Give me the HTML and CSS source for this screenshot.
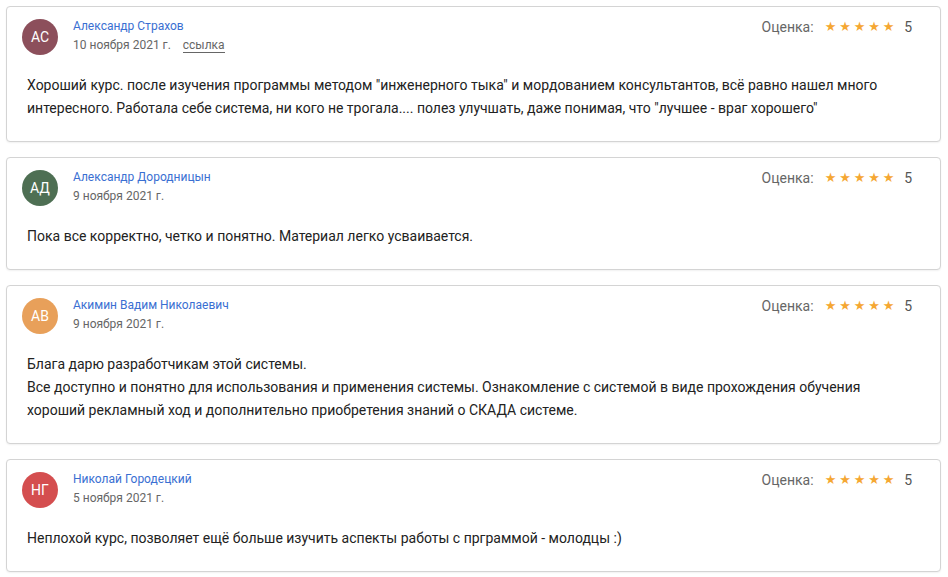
FILE: index.html
```html
<!DOCTYPE html>
<html lang="ru">
<head>
  <meta charset="UTF-8" />
  <meta name="viewport" content="width=device-width, initial-scale=1.0"/>
  <title>Отзывы</title>
  <link rel="stylesheet" href="styles.css">
</head>
<body>
  <div class="reviews">

    <div class="review">
      <div class="review-head">
        <div class="avatar avatar-plum">АС</div>
        <div class="author">
          <a class="author-name" href="#">Александр Страхов</a>
          <div class="author-meta">
            <span class="date">10 ноября 2021 г.</span>
            <a class="permalink" href="#">ссылка</a>
          </div>
        </div>
        <div class="rating">
          <span class="rating-label">Оценка:</span>
          <span class="stars"><span>★</span><span>★</span><span>★</span><span>★</span><span>★</span></span>
          <span class="rating-value">5</span>
        </div>
      </div>
      <div class="review-text">
        <p>Хороший курс. после изучения программы методом "инженерного тыка" и мордованием консультантов, всё равно нашел много интересного. Работала себе система, ни кого не трогала.... полез улучшать, даже понимая, что "лучшее - враг хорошего"</p>
      </div>
    </div>

    <div class="review">
      <div class="review-head">
        <div class="avatar avatar-green">АД</div>
        <div class="author">
          <a class="author-name" href="#">Александр Дородницын</a>
          <div class="author-meta">
            <span class="date">9 ноября 2021 г.</span>
          </div>
        </div>
        <div class="rating">
          <span class="rating-label">Оценка:</span>
          <span class="stars"><span>★</span><span>★</span><span>★</span><span>★</span><span>★</span></span>
          <span class="rating-value">5</span>
        </div>
      </div>
      <div class="review-text">
        <p>Пока все корректно, четко и понятно. Материал легко усваивается.</p>
      </div>
    </div>

    <div class="review">
      <div class="review-head">
        <div class="avatar avatar-orange">АВ</div>
        <div class="author">
          <a class="author-name" href="#">Акимин Вадим Николаевич</a>
          <div class="author-meta">
            <span class="date">9 ноября 2021 г.</span>
          </div>
        </div>
        <div class="rating">
          <span class="rating-label">Оценка:</span>
          <span class="stars"><span>★</span><span>★</span><span>★</span><span>★</span><span>★</span></span>
          <span class="rating-value">5</span>
        </div>
      </div>
      <div class="review-text">
        <p>Блага дарю разработчикам этой системы.<br>Все доступно и понятно для использования и применения системы. Ознакомление с системой в виде прохождения обучения хороший рекламный ход и дополнительно приобретения знаний о СКАДА системе.</p>
      </div>
    </div>

    <div class="review">
      <div class="review-head">
        <div class="avatar avatar-red">НГ</div>
        <div class="author">
          <a class="author-name" href="#">Николай Городецкий</a>
          <div class="author-meta">
            <span class="date">5 ноября 2021 г.</span>
          </div>
        </div>
        <div class="rating">
          <span class="rating-label">Оценка:</span>
          <span class="stars"><span>★</span><span>★</span><span>★</span><span>★</span><span>★</span></span>
          <span class="rating-value">5</span>
        </div>
      </div>
      <div class="review-text">
        <p>Неплохой курс, позволяет ещё больше изучить аспекты работы с прграммой - молодцы :)</p>
      </div>
    </div>

  </div>
</body>
</html>
```

FILE: styles.css
```css
* {
  margin: 0;
  padding: 0;
  box-sizing: border-box;
}

body {
  font-family: Roboto, 'Liberation Sans', Arial, sans-serif;
  background: #fff;
  color: #222;
  padding: 6px 7px 6px 6px;
}

.reviews {
  display: flex;
  flex-direction: column;
  gap: 15px;
}

.review {
  background: #fff;
  border: 1px solid #d4d4d4;
  border-radius: 4px;
  box-shadow: 0 1px 2px rgba(0, 0, 0, 0.06);
  padding: 11px 28px 21px 15px;
}

.review-head {
  display: flex;
  align-items: flex-start;
}

.avatar {
  width: 36px;
  height: 36px;
  margin-top: 1px;
  border-radius: 50%;
  flex-shrink: 0;
  display: flex;
  align-items: center;
  justify-content: center;
  color: #fff;
  font-size: 14px;
}

.avatar-plum { background: #8c4f5b; }
.avatar-green { background: #4e6f53; }
.avatar-orange { background: #e8a05a; }
.avatar-red { background: #d44e4f; }

.author {
  margin-left: 15px;
}

.author-name {
  display: block;
  font-size: 12px;
  line-height: 16px;
  color: #3a6fd2;
  text-decoration: none;
}

.author-meta {
  margin-top: 3px;
  font-size: 12px;
  line-height: 16px;
  color: #666;
}

.permalink {
  margin-left: 9px;
  color: #666;
  text-decoration: none;
  border-bottom: 1px solid #666;
}

.rating {
  margin-left: auto;
  display: flex;
  align-items: center;
  font-size: 14px;
  line-height: 18px;
  color: #666;
}

.stars {
  display: flex;
  margin-left: 11px;
  color: #f5a732;
  font-family: 'DejaVu Sans', sans-serif;
  font-size: 13px;
}

.stars span {
  width: 14.5px;
}

.rating-value {
  margin-left: 7px;
  color: #555;
}

.review-text {
  margin-top: 19px;
  padding-left: 5px;
  font-size: 14px;
  line-height: 23px;
  color: #222;
}
```
